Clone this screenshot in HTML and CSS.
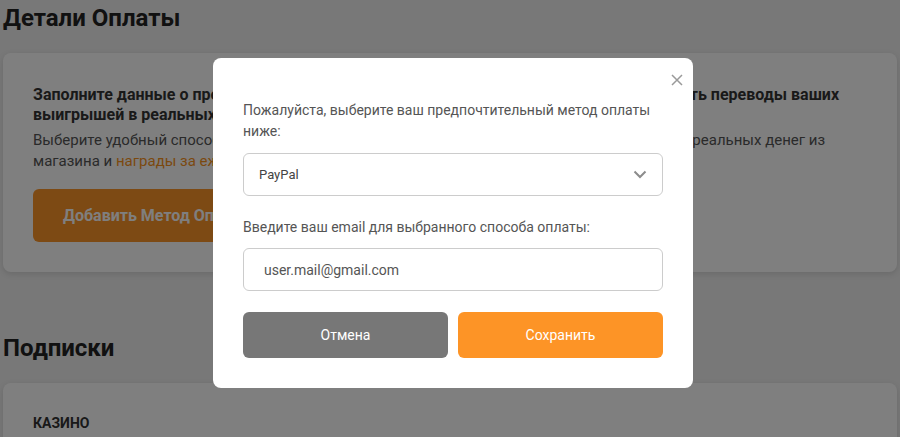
FILE: index.html
```html
<!DOCTYPE html>
<html lang="ru">
<head>
    <meta charset="UTF-8">
    <meta name="viewport" content="width=device-width, initial-scale=1.0">
    <title>Детали Оплаты</title>
    <link rel="stylesheet" href="styles.css">
</head>
<body>
    <main class="page">
        <h2 class="section-title">Детали Оплаты</h2>
        <div class="card">
            <div class="card-title">Заполните данные о предпочтительном методе оплаты, чтобы мы могли осуществлять переводы ваших выигрышей в реальных деньгах.</div>
            <p class="card-text">Выберите удобный способ оплаты, чтобы без задержек получать призы, выигрыши и вывод реальных денег из магазина и <a href="#" class="link">награды за ежедневные задания</a>.</p>
            <button class="btn-add">Добавить Метод Оплаты</button>
        </div>

        <h2 class="section-title subs-title">Подписки</h2>
        <div class="card">
            <div class="subs-label">КАЗИНО</div>
        </div>
    </main>

    <div class="overlay">
        <div class="modal">
            <button class="modal-close" aria-label="Закрыть">
                <svg width="12" height="12" viewBox="0 0 12 12"><path d="M1 1l10 10M11 1L1 11" stroke="#9a9a9a" stroke-width="1.5" fill="none"/></svg>
            </button>
            <p class="modal-text">Пожалуйста, выберите ваш предпочтительный метод оплаты ниже:</p>
            <div class="select">
                <span>PayPal</span>
                <svg width="14" height="9" viewBox="0 0 14 9"><path d="M1.5 1.5l5.5 5.5 5.5-5.5" stroke="#8c8c8c" stroke-width="2" fill="none"/></svg>
            </div>
            <label class="modal-label">Введите ваш email для выбранного способа оплаты:</label>
            <input class="modal-input" type="text" value="user.mail@gmail.com">
            <div class="modal-actions">
                <button class="btn btn-cancel">Отмена</button>
                <button class="btn btn-save">Сохранить</button>
            </div>
        </div>
    </div>
</body>
</html>
```

FILE: styles.css
```css
* {
    box-sizing: border-box;
}
body {
    margin: 0;
    background: #f0f0f0;
    font-family: Roboto, "Noto Sans", sans-serif;
    color: #333;
    overflow: hidden;
}
.page {
    padding: 0 3px;
}
.section-title {
    font-size: 24px;
    font-weight: 700;
    color: #222;
    margin: 0;
    padding-top: 2px;
    line-height: 32px;
}
.subs-title {
    margin-top: 58px;
}
.card {
    background: #fff;
    border-radius: 8px;
    box-shadow: 0 2px 6px rgba(0, 0, 0, 0.12);
    padding: 32px 30px 30px;
    margin-top: 19px;
}
.card-title {
    font-size: 16px;
    font-weight: 700;
    line-height: 20px;
    color: #333;
}
.card-text {
    font-size: 15px;
    line-height: 21px;
    color: #555;
    margin: 5px 0 0;
}
.link {
    color: #f7931e;
    text-decoration: none;
}
.btn-add {
    margin-top: 17px;
    background: #fb9429;
    color: #fff;
    border: none;
    border-radius: 6px;
    font-family: inherit;
    font-size: 16px;
    font-weight: 700;
    padding: 0 30px;
    height: 53px;
    width: 330px;
    text-align: left;
}
.subs-label {
    font-size: 14px;
    font-weight: 700;
    color: #333;
}

.overlay {
    position: fixed;
    inset: 0;
    background: rgba(0, 0, 0, 0.5);
    display: flex;
    justify-content: center;
    padding: 58px 0 0 6px;
}
.modal {
    position: relative;
    width: 480px;
    height: 330px;
    background: #fff;
    border-radius: 8px;
    padding: 42px 30px 30px;
}
.modal-close {
    position: absolute;
    top: 12px;
    right: 6px;
    background: none;
    border: none;
    padding: 0;
    width: 20px;
    height: 20px;
    display: flex;
    align-items: center;
    justify-content: center;
}
.modal-text {
    margin: 0;
    font-size: 14px;
    line-height: 21px;
    color: #555;
}
.select {
    margin-top: 11px;
    height: 43px;
    border: 1px solid #ccc;
    border-radius: 6px;
    padding: 0 15px;
    display: flex;
    align-items: center;
    justify-content: space-between;
    font-size: 13px;
    color: #444;
}
.modal-label {
    display: block;
    margin-top: 21px;
    font-size: 14px;
    line-height: 20px;
    color: #555;
}
.modal-input {
    display: block;
    width: 100%;
    height: 43px;
    margin-top: 11px;
    border: 1px solid #ccc;
    border-radius: 6px;
    padding: 0 20px;
    font-family: inherit;
    font-size: 14px;
    color: #555;
}
.modal-actions {
    display: flex;
    gap: 10px;
    margin-top: 21px;
}
.btn {
    flex: 1;
    height: 46px;
    border: none;
    border-radius: 6px;
    color: #fff;
    font-family: inherit;
    font-size: 14px;
}
.btn-cancel {
    background: #777;
}
.btn-save {
    background: #fd9426;
}
```
